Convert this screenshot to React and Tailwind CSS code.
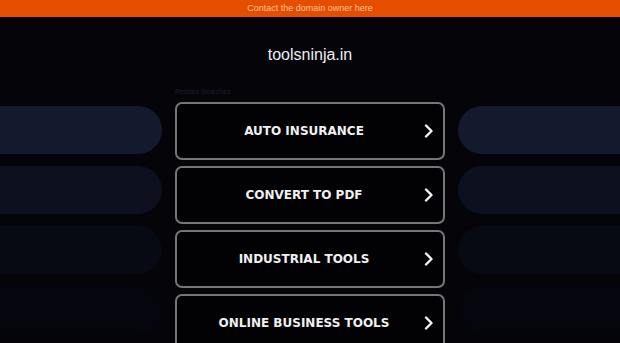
const items = ["AUTO INSURANCE", "CONVERT TO PDF", "INDUSTRIAL TOOLS", "ONLINE BUSINESS TOOLS"];
const pillColors = ["bg-[#141a2d]", "bg-[#0d101f]", "bg-[#080a13]", "bg-[#05060d]"];

const Chevron = () => (
    <svg width="10" height="14" viewBox="0 0 10 14" fill="none" className="absolute right-[9px] top-1/2 -translate-y-1/2">
        <path d="M2 1.5 L7.5 7 L2 12.5" stroke="#f2f2f2" strokeWidth="2.4" strokeLinecap="round" strokeLinejoin="round" />
    </svg>
);

const App = () => {
    return (
        <div className="w-[620px] h-[343px] overflow-hidden bg-[#040409] font-['Liberation_Sans',Arial,sans-serif]">
            <div className="h-[17px] bg-[#e54e00] flex items-center justify-center">
                <span className="text-[9px] leading-none text-[#f8c29a]">Contact the domain owner here</span>
            </div>

            <div className="pt-[28px] text-center text-[16px] leading-[20px] text-[#eeeeee]">
                toolsninja.in
            </div>

            <div className="flex gap-[13px] mt-[17px]">
                <div className="flex-1 pt-[24px] flex flex-col gap-[12px]">
                    {pillColors.map((c) => (
                        <div key={c} className={`h-[48px] rounded-r-full ${c}`}></div>
                    ))}
                </div>

                <div className="w-[270px] shrink-0">
                    <div className="h-[20px] flex items-center text-[7px] text-[#1b1e34]">Related Searches</div>
                    <div className="flex flex-col gap-[6px]">
                        {items.map((label) => (
                            <div
                                key={label}
                                className="relative h-[58px] rounded-[7px] border-2 border-[#76767a] bg-[#020204] flex items-center justify-center pr-[12px]"
                            >
                                <span className="font-['DejaVu_Sans',sans-serif] font-bold text-[12px] text-[#f0f0f0]">
                                    {label}
                                </span>
                                <Chevron />
                            </div>
                        ))}
                    </div>
                </div>

                <div className="flex-1 pt-[24px] flex flex-col gap-[12px]">
                    {pillColors.map((c) => (
                        <div key={c} className={`h-[48px] rounded-l-full ${c}`}></div>
                    ))}
                </div>
            </div>
        </div>
    );
};

export default App;
